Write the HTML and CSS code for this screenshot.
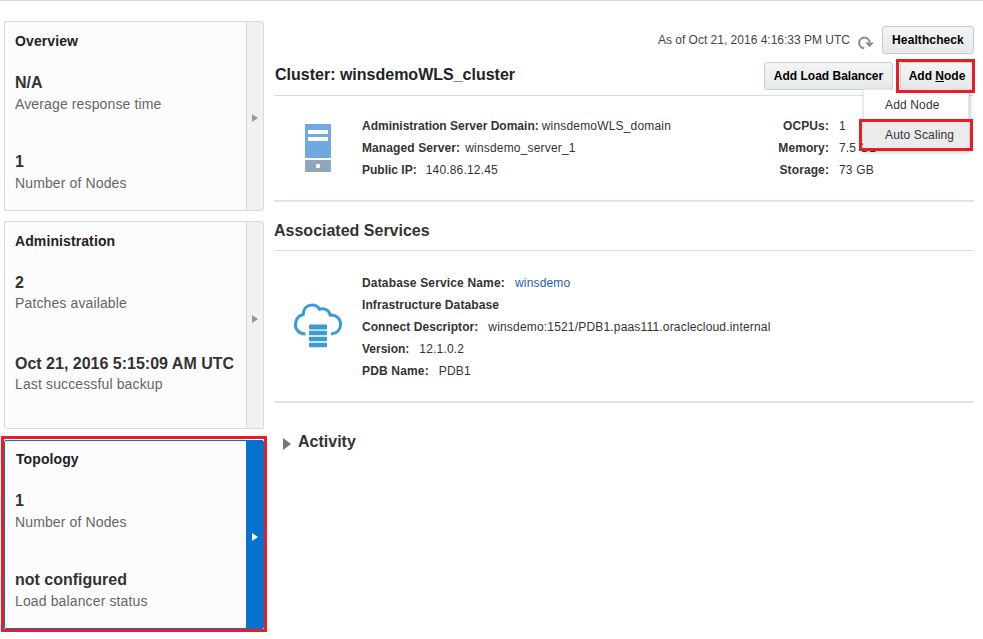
FILE: index.html
```html
<!DOCTYPE html>
<html lang="en">
<head>
<meta charset="utf-8">
<title>winsdemoWLS_cluster</title>
<link rel="stylesheet" href="styles.css">
</head>
<body>
<div class="page">
  <nav class="tiles">
    <section class="tile tile-overview">
      <div class="tile-body">
        <h2>Overview</h2>
        <div class="metric"><strong>N/A</strong><span>Average response time</span></div>
        <div class="metric"><strong>1</strong><span>Number of Nodes</span></div>
      </div>
      <div class="tile-handle"><i class="arrow"></i></div>
    </section>
    <section class="tile tile-admin">
      <div class="tile-body">
        <h2>Administration</h2>
        <div class="metric"><strong>2</strong><span>Patches available</span></div>
        <div class="metric"><strong class="date">Oct 21, 2016 5:15:09 AM UTC</strong><span>Last successful backup</span></div>
      </div>
      <div class="tile-handle"><i class="arrow"></i></div>
    </section>
    <section class="tile tile-selected">
      <div class="tile-body">
        <h2>Topology</h2>
        <div class="metric"><strong>1</strong><span>Number of Nodes</span></div>
        <div class="metric"><strong>not configured</strong><span>Load balancer status</span></div>
      </div>
      <div class="tile-handle"><i class="arrow"></i></div>
      <div class="mark mark-tile"></div>
    </section>
  </nav>

  <main class="content">
    <div class="status">
      <span class="asof">As of Oct 21, 2016 4:16:33 PM UTC</span>
      <svg class="refresh" width="18" height="16" viewBox="0 0 18 16">
        <path d="M7.200 13.100A5.200 5.200 0 1 1 12.600 7.500" fill="none" stroke="#8c9093" stroke-width="2.200"/>
        <path d="M8 7.600H17L12.500 12.300Z" fill="#8c9093"/>
      </svg>
      <button class="btn btn-health">Healthcheck</button>
    </div>
    <header class="cluster-head">
      <h1>Cluster: winsdemoWLS_cluster</h1>
      <button class="btn btn-balancer">Add Load Balancer</button>
      <div class="menu-wrap">
        <button class="btn btn-node">Add <u>N</u>ode</button>
        <div class="mark mark-node"></div>
        <div class="menu">
          <div class="menu-item">Add Node</div>
          <div class="menu-item active">Auto Scaling<div class="mark mark-item"></div></div>
        </div>
      </div>
    </header>

    <section class="panel panel-cluster">
      <div class="icon-cell">
        <svg width="28" height="50" viewBox="0 0 28 50">
          <rect x="1" y="1" width="26" height="34" rx="1" fill="#6ea9e0"/>
          <rect x="4" y="7" width="20" height="4" fill="#fff"/>
          <rect x="4" y="14" width="20" height="4" fill="#fff"/>
          <rect x="1" y="37" width="26" height="12" rx="1" fill="#90a7bb"/>
          <circle cx="14" cy="43" r="2.200" fill="#fff"/>
        </svg>
      </div>
      <dl class="details">
        <div><dt class="tight">Administration Server Domain:</dt><dd class="gap-s">winsdemoWLS_domain</dd></div>
        <div><dt>Managed Server:</dt><dd class="gap-m">winsdemo_server_1</dd></div>
        <div><dt class="tight">Public IP:</dt><dd class="gap-ip">140.86.12.45</dd></div>
      </dl>
      <dl class="resources">
        <dt>OCPUs:</dt><dd>1</dd>
        <dt>Memory:</dt><dd>7.5 GB</dd>
        <dt>Storage:</dt><dd>73 GB</dd>
      </dl>
    </section>

    <h2 class="section-title">Associated Services</h2>
    <section class="panel panel-services">
      <div class="icon-cell">
        <svg width="50" height="46" viewBox="0 0 50 46">
          <path d="M12.500 32C6 32 2.400 27.500 2.400 22.500C2.400 17 6 13.300 10.200 12.600C10.500 6 14.500 3 19 3C22.300 3 25 4.500 26.500 7.200C32 5.500 36.500 8.800 37.200 13.200C43.500 12.500 47.600 17 47.600 22.300C47.600 27.500 44.200 31.400 38 32" fill="none" stroke="#3b9bd8" stroke-width="3"/>
          <g fill="#3b9bd8">
            <rect x="16" y="22.500" width="18" height="5" rx="1"/>
            <rect x="16" y="28.700" width="18" height="4.600" rx="1"/>
            <rect x="16" y="34.700" width="18" height="4.600" rx="1"/>
            <rect x="16" y="40.700" width="18" height="4.600" rx="1"/>
          </g>
        </svg>
      </div>
      <dl class="details">
        <div><dt class="wide">Database Service Name:</dt><dd class="link">winsdemo</dd></div>
        <div><dt>Infrastructure Database</dt></div>
        <div><dt class="snug">Connect Descriptor:</dt><dd>winsdemo:1521/PDB1.paas111.oraclecloud.internal</dd></div>
        <div><dt class="tight">Version:</dt><dd>12.1.0.2</dd></div>
        <div><dt class="wide">PDB Name:</dt><dd>PDB1</dd></div>
      </dl>
    </section>

    <div class="activity"><i class="disclosure"></i><h2>Activity</h2></div>
  </main>
</div>
</body>
</html>
```

FILE: styles.css
```css
* { box-sizing: border-box; }
body {
  margin: 0;
  height: 639px;
  overflow: hidden;
  background: #fff;
  color: #333;
  font: 12px/22px "Liberation Sans", Arial, sans-serif;
}
h1, h2, dl, dd { margin: 0; }
.page {
  display: flex;
  gap: 10px;
  height: 639px;
  padding: 20px 9px 0 4px;
  border-top: 1px solid #d6dfe6;
}

/* Left-hand tiles */
.tiles { width: 260px; }
.tile {
  position: relative;
  display: flex;
  height: 190px;
  margin-bottom: 10px;
  border: 1px solid #d9dadb;
  border-radius: 2px;
  background: #fcfcfc;
}
.tile-admin { height: 208px; margin-bottom: 11px; }
.tile-selected { height: 189px; border-color: #0572ce; }
.tile-body { flex: 1; padding: 9px 0 0 10px; line-height: 20px; }
.tile h2 { font-size: 14px; line-height: 20px; color: #222; letter-spacing: .1px; }
.tile-overview h2 { margin-bottom: 22px; }
.tile-selected .tile-body { padding-top: 8px; }
.tile-selected h2 { padding-left: 1px; margin-bottom: 22px; }
.metric { margin-top: 21px; }
.tile-admin h2 + .metric { margin-top: 22px; }
.metric strong { display: block; font-size: 16px; height: 21px; white-space: nowrap; }
.tile-admin .metric strong { height: 20px; }
.metric span { display: block; font-size: 14px; color: #666; letter-spacing: .13px; }
.metric + .metric { margin-top: 38px; }
.tile-admin .metric + .metric { margin-top: 41px; }
.tile-handle {
  display: flex;
  align-items: center;
  width: 17px;
  padding: 4px 0 0 5px;
  border-left: 1px solid #d9dadb;
  background: #f1f1f1;
}
.tile-admin .tile-handle { padding: 0 0 13px 5px; }
.tile-selected .tile-handle { border-color: #0572ce; background: #0572ce; }
.arrow {
  border: solid transparent;
  border-width: 4.5px 0 4.5px 6px;
  border-left-color: #8e97b0;
}
.tile-selected .arrow { border-left-color: #fff; }

/* Highlight frames */
.mark { position: absolute; border: 3px solid #ed1c24; pointer-events: none; }
.mark-tile { inset: -5px -4px -4px; }
.mark-node { inset: -3px -1px -3px -4px; z-index: 1; }
.mark-item { inset: -1px -5px -1px -5px; }

/* Header */
.content { flex: 1; }
.status { display: flex; align-items: center; justify-content: flex-end; height: 36px; padding-top: 2px; }
.asof { color: #444; }
.refresh { margin: 5px 7px 0 7px; }
.btn {
  height: 28px;
  padding: 0;
  border: 1px solid #c4ced7;
  border-radius: 3px;
  background: linear-gradient(#f3f5f5, #e6e9e9);
  color: #000;
  font: bold 12px/24px "Liberation Sans", Arial, sans-serif;
}
.btn-health { width: 92px; letter-spacing: .1px; }
.btn-balancer { width: 129px; margin-left: auto; }
.btn-node { display: block; width: 74px; letter-spacing: 0; }
.cluster-head { display: flex; align-items: center; height: 39px; border-bottom: 1px solid #d6dfe6; }
h1 { font-size: 16px; color: #222; padding: 0 0 2px 1px; }
.menu-wrap { position: relative; margin-left: 7px; }
.menu {
  position: absolute;
  top: 27px;
  right: 5px;
  width: 106px;
  height: 61px;
  background: #fff;
  border: 1px solid #e4e6e8;
  box-shadow: 1px 2px 4px rgba(0, 0, 0, .25);
}
.menu-item { position: relative; height: 30px; padding-left: 21px; line-height: 31px; letter-spacing: .15px; }
.menu-item.active { background: #ebebed; }

/* Detail panels */
.panel { display: flex; border-bottom: 2px solid #dde3e8; }
.panel-cluster { height: 106px; padding-top: 19px; }
.panel-services { height: 153px; padding-top: 21px; border-top: 1px solid #d6dfe6; }
.icon-cell { width: 88px; text-align: center; }
.icon-cell svg { display: block; margin: 8px auto 0; }
.panel-services .icon-cell svg { margin-top: 30px; margin-left: 19px; }
.details { flex: 1; }
.details div { display: flex; gap: 10px; height: 22px; }
dt { font-weight: bold; letter-spacing: .1px; }
dt.tight { letter-spacing: 0; }
dt.snug { letter-spacing: .05px; }
dt.wide { letter-spacing: .16px; }
.details .gap-s { margin-left: -7px; }
.details .gap-m { margin-left: -5px; }
.details .gap-ip { margin-left: -1px; }
dd { letter-spacing: .18px; }
.link { color: #1f5cb5; }
.resources { display: grid; grid-template-columns: 56px 135px; grid-auto-rows: 22px; column-gap: 10px; }
.resources dt { text-align: right; }
.section-title { height: 48px; padding-top: 18px; font-size: 16px; line-height: 22px; }
.activity { display: flex; align-items: center; height: 22px; margin-top: 28px; padding-left: 9px; }
.activity h2 { font-size: 16px; margin-left: 7px; }
.disclosure {
  margin-top: 4px;
  border: solid transparent;
  border-width: 6.5px 0 6.5px 8px;
  border-left-color: #777;
}
```
